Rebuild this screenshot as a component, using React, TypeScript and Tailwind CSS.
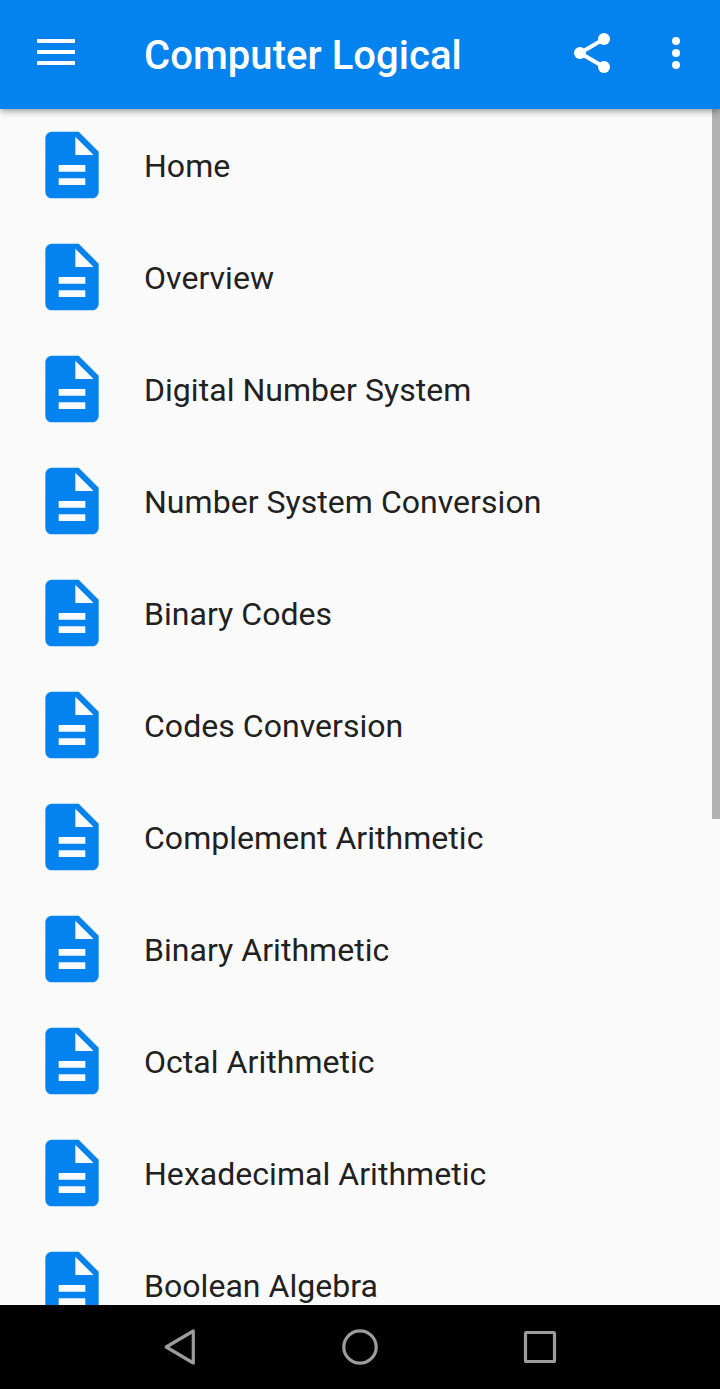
const topics = [
  "Home",
  "Overview",
  "Digital Number System",
  "Number System Conversion",
  "Binary Codes",
  "Codes Conversion",
  "Complement Arithmetic",
  "Binary Arithmetic",
  "Octal Arithmetic",
  "Hexadecimal Arithmetic",
  "Boolean Algebra",
];

function DocIcon() {
  return (
    <svg viewBox="0 0 24 24" className="w-20 h-20 shrink-0 fill-[#0482ee]">
      <path d="M14 2H6c-1.1 0-1.99.9-1.99 2L4 20c0 1.1.89 2 1.99 2H18c1.1 0 2-.9 2-2V8l-6-6zm2 16H8v-2h8v2zm0-4H8v-2h8v2zm-3-5V3.5L18.5 9H13z" />
    </svg>
  );
}

function AppBar() {
  return (
    <header className="relative z-10 flex items-center h-[109px] shrink-0 pl-[37px] pr-5 bg-[#0482ee] shadow-[0_2px_7px_rgba(0,0,0,0.4)]">
      <button aria-label="Menu" className="flex flex-col gap-[7px] w-[38px] mb-[5px]">
        <span className="w-full h-1 bg-white" />
        <span className="w-full h-1 bg-white" />
        <span className="w-full h-1 bg-white" />
      </button>
      <h1 className="ml-[69px] pt-0.5 flex-1 text-[40px] leading-[48px] font-medium tracking-[0.05px] text-white whitespace-nowrap">
        Computer Logical
      </h1>
      <div className="flex gap-9 mb-[3px]">
        <svg viewBox="0 0 24 24" className="w-12 h-12 fill-white">
          <path d="M18 5L6 12l12 7" fill="none" stroke="white" strokeWidth="2" />
          <circle cx="18" cy="5" r="3" />
          <circle cx="6" cy="12" r="3" />
          <circle cx="18" cy="19" r="3" />
        </svg>
        <svg viewBox="0 0 24 24" className="w-12 h-12 fill-white">
          <circle cx="12" cy="6" r="2" />
          <circle cx="12" cy="12" r="2" />
          <circle cx="12" cy="18" r="2" />
        </svg>
      </div>
    </header>
  );
}

function NavBar() {
  return (
    <nav className="flex items-center justify-center gap-[132px] h-[84px] shrink-0 bg-black">
      <svg viewBox="0 0 48 48" className="w-12 h-12 fill-none stroke-[#9c9c9c] stroke-[3.2]">
        <path d="M37.3 8v32L10.2 24z" strokeLinejoin="round" />
      </svg>
      <svg viewBox="0 0 48 48" className="w-12 h-12 fill-none stroke-[#9c9c9c] stroke-[3.2]">
        <circle cx="24" cy="24" r="16.2" />
      </svg>
      <svg viewBox="0 0 48 48" className="w-12 h-12 fill-none stroke-[#9c9c9c] stroke-[3.2]">
        <rect x="9.5" y="9.5" width="29" height="29" rx="1" />
      </svg>
    </nav>
  );
}

export default function App() {
  return (
    <div className="flex flex-col w-[720px] h-[1389px] overflow-hidden bg-[#fafafa] font-[Roboto,sans-serif]">
      <AppBar />
      <main className="flex flex-1 min-h-0 overflow-hidden">
        <ul className="flex-1">
          {topics.map((topic) => (
            <li key={topic} className="flex items-center h-28 pl-8 gap-8">
              <DocIcon />
              <span className="pt-0.5 text-[32px] leading-10 tracking-[0.04px] text-[#212121] whitespace-nowrap">
                {topic}
              </span>
            </li>
          ))}
        </ul>
        {/* Scroll thumb */}
        <div className="w-2 h-[710px] bg-[#b2b2b2]" />
      </main>
      <NavBar />
    </div>
  );
}
